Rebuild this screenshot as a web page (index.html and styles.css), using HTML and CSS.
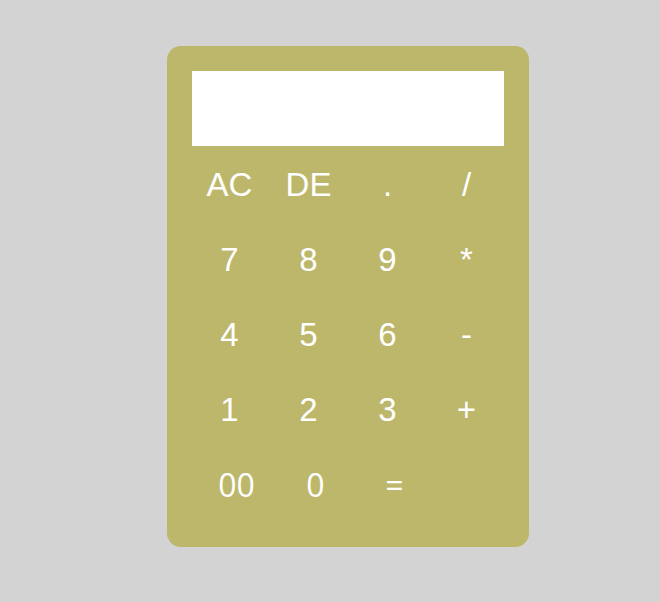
FILE: index.html
```html
<!DOCTYPE html>
<html>
<head>
<meta charset="utf-8">
<link rel="stylesheet" href="styles.css">
</head>
<body>
<div class="calc">
  <div class="display"></div>
  <div class="keys">
    <button class="key">AC</button>
    <button class="key">DE</button>
    <button class="key">.</button>
    <button class="key">/</button>
    <button class="key">7</button>
    <button class="key">8</button>
    <button class="key">9</button>
    <button class="key">*</button>
    <button class="key">4</button>
    <button class="key">5</button>
    <button class="key">6</button>
    <button class="key">-</button>
    <button class="key">1</button>
    <button class="key">2</button>
    <button class="key">3</button>
    <button class="key">+</button>
  </div>
  <div class="keys last">
    <button class="key alt">00</button>
    <button class="key alt">0</button>
    <button class="key alt">=</button>
  </div>
</div>
</body>
</html>
```
FILE: styles.css
```css
html, body {
  margin: 0;
  padding: 0;
  background: #d3d3d3;
}
body {
  padding-top: 46px;
  font-family: "Liberation Sans", Arial, sans-serif;
}
.calc {
  width: 312px;
  margin-left: 167px;
  padding: 25px;
  background: #bdb76b;
  border-radius: 14px;
}
.display {
  height: 75px;
  background: #ffffff;
  margin-bottom: 1px;
}
.keys {
  display: grid;
  grid-template-columns: repeat(4, 75px);
  grid-auto-rows: 75px;
  column-gap: 4px;
}
.keys.last {
  padding-left: 7px;
}
.key {
  border: none;
  background: transparent;
  color: #ffffff;
  font-family: "Liberation Sans", Arial, sans-serif;
  font-size: 33px;
  line-height: 1;
  padding: 0;
  margin: 0;
}
.key.alt {
  font-family: "Open Sans", "Noto Sans", sans-serif;
  font-size: 32px;
}
```
